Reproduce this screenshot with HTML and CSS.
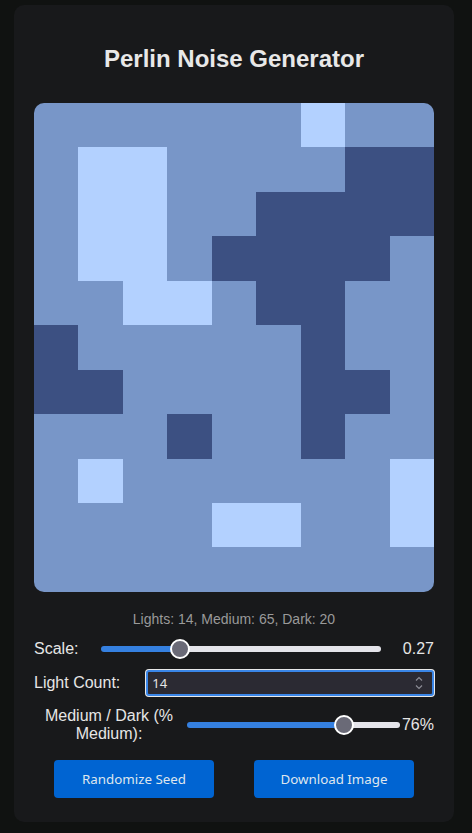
FILE: index.html
```html
<!DOCTYPE html>
<html lang="en">

<head>
    <meta charset="UTF-8">
    <meta name="viewport" content="width=device-width, initial-scale=1.0">
    <title>Perlin Noise Generator</title>
    <link rel="stylesheet" href="styles.css">
</head>

<body>

    <div class="container">
        <h1>Perlin Noise Generator</h1>

        <div class="noiseCanvas">
            <svg viewBox="0 0 9 11" preserveAspectRatio="none" shape-rendering="crispEdges">
                <rect class="medium" x="0" y="0" width="9" height="11" />
                <!-- light cells -->
                <rect class="light" x="6" y="0" width="1" height="1" />
                <rect class="light" x="1" y="1" width="2" height="3" />
                <rect class="light" x="2" y="4" width="2" height="1" />
                <rect class="light" x="1" y="8" width="1" height="1" />
                <rect class="light" x="8" y="8" width="1" height="2" />
                <rect class="light" x="4" y="9" width="2" height="1" />
                <!-- dark cells -->
                <rect class="dark" x="7" y="1" width="2" height="2" />
                <rect class="dark" x="5" y="2" width="2" height="1" />
                <rect class="dark" x="4" y="3" width="4" height="1" />
                <rect class="dark" x="5" y="4" width="2" height="1" />
                <rect class="dark" x="0" y="5" width="1" height="2" />
                <rect class="dark" x="1" y="6" width="1" height="1" />
                <rect class="dark" x="6" y="5" width="1" height="3" />
                <rect class="dark" x="7" y="6" width="1" height="1" />
                <rect class="dark" x="3" y="7" width="1" height="1" />
            </svg>
        </div>

        <p class="stats">Lights: 14, Medium: 65, Dark: 20</p>

        <div class="controls">
            <div class="row">
                <label for="scale">Scale:</label>
                <input type="range" id="scale" class="slider scaleSlider" min="0.01" max="1" step="0.01" value="0.27" style="--fill: 28%">
                <span class="value">0.27</span>
            </div>

            <div class="row">
                <label for="lightCount">Light Count:</label>
                <span class="numberWrap">
                    <input type="number" id="lightCount" class="numberInput" value="14" min="0" max="99">
                    <svg class="spinner" viewBox="0 0 8 14" width="8" height="14">
                        <path d="M1 4.5 L4 1.5 L7 4.5 M1 9.5 L4 12.5 L7 9.5" />
                    </svg>
                </span>
            </div>

            <div class="row">
                <label for="ratio" class="ratioLabel">Medium / Dark (% Medium):</label>
                <input type="range" id="ratio" class="slider ratioSlider" min="0" max="100" value="76" style="--fill: 73.6%">
                <span class="value ratioValue">76%</span>
            </div>
        </div>

        <div class="buttons">
            <button id="randomizeBtn">Randomize Seed</button>
            <button id="downloadBtn">Download Image</button>
        </div>
    </div>

</body>

</html>
```

FILE: styles.css
```css
body {
    font-family: 'Liberation Sans', Arial, sans-serif;
    background-color: #101211;
    color: #e6e6e6;
    margin: 0;
    padding: 5px 0 0 14px;
}

.container {
    width: 400px;
    padding: 20px 20px 24px;
    background-color: #18191b;
    border-radius: 10px;
}

h1 {
    font-size: 24px;
    font-weight: bold;
    text-align: center;
    color: #e8e8e8;
    margin: 20px 0 30px;
}

.noiseCanvas {
    width: 400px;
    aspect-ratio: 9 / 11;
    border-radius: 10px;
    overflow: hidden;
}

.noiseCanvas svg {
    display: block;
    width: 100%;
    height: 100%;
}

.medium {
    fill: #7896c8;
}

.light {
    fill: #b3d1ff;
}

.dark {
    fill: #3c5082;
}

.stats {
    font-size: 14px;
    line-height: 16px;
    color: #9a9a9a;
    text-align: center;
    margin: 19px 0 12px;
}

.controls {
    display: flex;
    flex-direction: column;
    gap: 11px;
}

.row {
    display: flex;
    align-items: center;
    font-size: 16px;
}

/* Range sliders */
.slider {
    -webkit-appearance: none;
    appearance: none;
    height: 20px;
    margin: 0;
    background: transparent;
    flex: 1;
}

.slider::-webkit-slider-runnable-track {
    height: 6px;
    border-radius: 3px;
    background: linear-gradient(to right, #3580e0 var(--fill), #e4e4ea var(--fill));
}

.slider::-webkit-slider-thumb {
    -webkit-appearance: none;
    width: 20px;
    height: 20px;
    margin-top: -7px;
    border-radius: 50%;
    border: 2px solid #ffffff;
    background-color: #6a6a77;
    box-sizing: border-box;
}

.scaleSlider {
    margin: 0 22px 0 23px;
}

.ratioLabel {
    width: 150px;
    flex-shrink: 0;
    text-align: center;
}

.ratioSlider {
    margin: 0 2px 0 3px;
}

.value {
    text-align: right;
}

/* Number input */
.numberWrap {
    position: relative;
    flex: 1;
    margin-left: 26px;
    display: flex;
}

.numberInput {
    -moz-appearance: textfield;
    flex: 1;
    height: 26px;
    box-sizing: border-box;
    padding: 0 4px;
    border: 2px solid #3a86e8;
    border-radius: 3px;
    box-shadow: 0 0 0 1px #e8e8e8;
    background-color: #2b2a33;
    color: #e6e6e6;
    font-family: 'Noto Sans', sans-serif;
    font-size: 13px;
    outline: none;
}

.numberInput::-webkit-inner-spin-button,
.numberInput::-webkit-outer-spin-button {
    -webkit-appearance: none;
    margin: 0;
}

.spinner {
    position: absolute;
    right: 11px;
    top: 6px;
    fill: none;
    stroke: #8c8c96;
    stroke-width: 1.2;
}

/* Buttons */
.buttons {
    display: flex;
    justify-content: center;
    gap: 40px;
    margin-top: 17px;
}

button {
    width: 160px;
    padding: 10px 0;
    line-height: 18px;
    border: none;
    border-radius: 4px;
    background-color: #0064d2;
    color: #dfe6ee;
    font-family: 'Noto Sans', sans-serif;
    font-size: 13.33px;
    cursor: pointer;
}

button:hover {
    background-color: #0057b8;
}
```
